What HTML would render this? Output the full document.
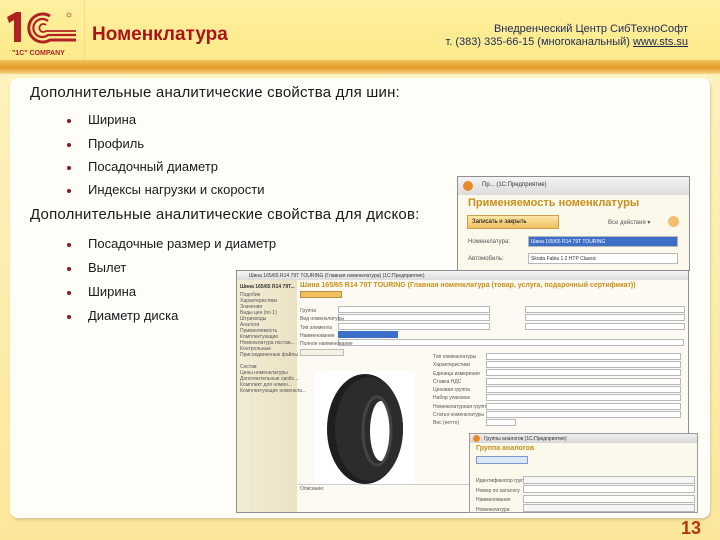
<!DOCTYPE html>
<html><head><meta charset="utf-8"><style>
*{margin:0;padding:0;box-sizing:border-box}
body{width:720px;height:540px;overflow:hidden;position:relative;background:linear-gradient(#fdf3c4,#fbe79a);font-family:"Liberation Sans","DejaVu Sans",sans-serif}
.hdr{position:absolute;left:0;top:0;width:720px;height:62px;background:linear-gradient(#fef0a0,#fde98a)}
.bar{position:absolute;left:0;top:60px;width:720px;height:14px;background:linear-gradient(#f4c45a,#e49a2a 55%,#f6d68a)}
.sep{position:absolute;left:84px;top:0;width:1px;height:62px;background:#f6dc8a}
.panel{position:absolute;left:10px;top:78px;width:700px;height:440px;background:#fffdf8;border-radius:8px;box-shadow:1px 2px 2px #d8c890}
.t{position:absolute;white-space:nowrap}
.h{font-size:15px;color:#1a1a1a;letter-spacing:.2px}
.b{font-size:13px;color:#1a1a1a}
.dot{position:absolute;width:4px;height:4px;border-radius:2px;background:#8b1a1a}
.win{position:absolute;background:#f7f3e4;border:1px solid #8e8e8e;overflow:hidden}
.tb{position:absolute;left:0;top:0;right:0;background:linear-gradient(#f4f4f4,#dcdcdc);font-size:6px;color:#333}
.f{position:absolute;background:#fff;border:1px solid #b8b8b8}
.l{position:absolute;font-size:5px;color:#555;white-space:nowrap}
</style></head><body>
<div class="hdr"></div>
<div class="sep"></div>
<div class="bar"></div>
<!-- logo -->
<svg style="position:absolute;left:4px;top:10px" width="76" height="48" viewBox="0 0 76 48">
<path d="M3 7 L12 2 L17 2 L17 32 L10 32 L10 10 L5 13Z" fill="#b02222"/>
<g fill="none" stroke="#b02222">
<path d="M46 6 A14 14 0 1 0 46 30 L72 30" stroke-width="3"/>
<path d="M44 11 A9 9 0 1 0 44 25 L72 25" stroke-width="2.2"/>
<path d="M42 15 A4 4 0 1 0 42 21 L72 21" stroke-width="1.8"/>
</g>
<circle cx="65" cy="5" r="2" fill="none" stroke="#b02222" stroke-width=".6"/>
<text x="8" y="45" font-size="7" font-family="Liberation Sans" font-weight="bold" fill="#b02222">"1C" COMPANY</text>
</svg>
<div class="t" style="left:92px;top:24px;font-size:19px;font-weight:bold;color:#a8141a">Номенклатура</div>
<div class="t" style="right:32px;top:23px;font-size:11px;color:#1c2a55;text-align:right;line-height:13px">Внедренческий Центр СибТехноСофт<br>т. (383) 335-66-15 (многоканальный) <u>www.sts.su</u></div>
<div class="panel"></div>
<div class="t h" style="left:30px;top:84px">Дополнительные аналитические свойства для шин:</div>
<div class="dot" style="left:67px;top:119px"></div><div class="t b" style="left:88px;top:112px">Ширина</div>
<div class="dot" style="left:67px;top:143px"></div><div class="t b" style="left:88px;top:136px">Профиль</div>
<div class="dot" style="left:67px;top:166px"></div><div class="t b" style="left:88px;top:159px">Посадочный диаметр</div>
<div class="dot" style="left:67px;top:189px"></div><div class="t b" style="left:88px;top:182px">Индексы нагрузки и скорости</div>
<div class="t h" style="left:30px;top:206px">Дополнительные аналитические свойства для дисков:</div>
<div class="dot" style="left:67px;top:243px"></div><div class="t b" style="left:88px;top:236px">Посадочные размер и диаметр</div>
<div class="dot" style="left:67px;top:267px"></div><div class="t b" style="left:88px;top:260px">Вылет</div>
<div class="dot" style="left:67px;top:291px"></div><div class="t b" style="left:88px;top:284px">Ширина</div>
<div class="dot" style="left:67px;top:315px"></div><div class="t b" style="left:88px;top:308px">Диаметр диска</div>

<!-- top window -->
<div class="win" style="left:457px;top:176px;width:233px;height:95px;background:#fbf8ec">
<div class="tb" style="height:18px;padding:5px 0 0 24px">Пр... (1С:Предприятие)</div>
<div style="position:absolute;left:5px;top:4px;width:10px;height:10px;border-radius:5px;background:#e88a2a"></div>
<div class="t" style="left:10px;top:20px;font-size:11px;font-weight:bold;color:#c8901a">Применяемость номенклатуры</div>
<div style="position:absolute;left:9px;top:38px;width:92px;height:14px;background:linear-gradient(#fbe6a8,#f0c060);border:1px solid #c8a050;font-size:6px;padding:3px 4px">Записать и закрыть</div>
<div class="l" style="left:150px;top:42px;font-size:6px">Все действия ▾</div>
<div style="position:absolute;left:210px;top:39px;width:11px;height:11px;border-radius:6px;background:#f0c070"></div>
<div class="l" style="left:10px;top:62px;font-size:6px">Номенклатура:</div>
<div class="f" style="left:70px;top:59px;width:150px;height:11px;background:#3d6fc8"></div>
<div class="l" style="left:73px;top:62px;color:#fff">Шина 165/65 R14 79T TOURING</div>
<div class="l" style="left:10px;top:79px;font-size:6px">Автомобиль:</div>
<div class="f" style="left:70px;top:76px;width:150px;height:11px"></div>
<div class="l" style="left:73px;top:79px;color:#333">Skoda Fabia 1.2 HTP Classic</div>
</div>

<!-- big window -->
<div class="win" style="left:236px;top:270px;width:453px;height:243px;background:#fcfaf2">
<div class="tb" style="height:9px;font-size:5px;padding:2px 0 0 12px">Шина 165/65 R14 79T TOURING (Главная номенклатура) (1С:Предприятие)</div>
<div style="position:absolute;left:0;top:9px;width:60px;height:234px;background:linear-gradient(90deg,#f3edd6,#ebe2c4)"></div>
<div class="l" style="left:3px;top:13px;font-weight:bold;color:#333">Шина 165/65 R14 79T...</div>
<div class="l" style="left:3px;top:21px;line-height:6px">Подобие<br>Характеристики<br>Значения<br>Виды цен (по 1)<br>Штрихкоды<br>Аналоги<br>Применяемость<br>Комплектующие<br>Номенклатура постав...<br>Контрольные<br>Присоединенные файлы<br><br>Состав<br>Цены номенклатуры<br>Дополнительные свойс...<br>Комплект для номен...<br>Комплектующие номенкла...</div>
<div class="t" style="left:63px;top:11px;font-size:7px;font-weight:bold;color:#c8901a">Шина 165/65 R14 79T TOURING (Главная номенклатура (товар, услуга, подарочный сертификат))</div>
<div style="position:absolute;left:63px;top:20px;width:42px;height:7px;background:#f0c060;border:1px solid #b89040"></div>
<div class="f" style="left:101px;top:35px;width:152px;height:7px"></div>
<div class="f" style="left:101px;top:43px;width:152px;height:7px"></div>
<div class="f" style="left:101px;top:52px;width:152px;height:7px"></div>
<div style="position:absolute;left:101px;top:60px;width:60px;height:7px;background:#3d6fc8"></div>
<div class="f" style="left:101px;top:68px;width:346px;height:7px"></div>
<div class="f" style="left:288px;top:35px;width:160px;height:7px"></div>
<div class="f" style="left:288px;top:43px;width:160px;height:7px"></div>
<div class="f" style="left:288px;top:52px;width:160px;height:7px"></div>
<div class="l" style="left:63px;top:36px;line-height:8.3px">Группа<br>Вид номенклатуры<br>Тип элемента<br>Наименование<br>Полное наименование</div>
<div style="position:absolute;left:63px;top:78px;width:44px;height:7px;background:#f5f0e0;border:1px solid #bbb"></div>
<div style="position:absolute;left:78px;top:100px;width:100px;height:115px;background:#fff"></div>
<svg style="position:absolute;left:80px;top:100px" width="100" height="115" viewBox="0 0 100 115">
<ellipse cx="48" cy="58" rx="38" ry="55" fill="#1e1e1e"/>
<ellipse cx="52" cy="58" rx="34" ry="52" fill="#2c2c2c"/>
<ellipse cx="64" cy="60" rx="11" ry="30" fill="#fff"/>
<ellipse cx="60" cy="60" rx="14" ry="34" fill="none" stroke="#444" stroke-width="3"/>
</svg>
<div class="l" style="left:196px;top:82px;line-height:8.3px">Тип номенклатуры<br>Характеристики<br>Единица измерения<br>Ставка НДС<br>Ценовая группа<br>Набор упаковок<br>Номенклатурная группа<br>Статья номенклатуры<br>Вес (нетто)</div>
<div class="f" style="left:249px;top:82px;width:195px;height:7px"></div>
<div class="f" style="left:249px;top:90px;width:195px;height:7px"></div>
<div class="f" style="left:249px;top:98px;width:195px;height:7px"></div>
<div class="f" style="left:249px;top:107px;width:195px;height:7px"></div>
<div class="f" style="left:249px;top:115px;width:195px;height:7px"></div>
<div class="f" style="left:249px;top:123px;width:195px;height:7px"></div>
<div class="f" style="left:249px;top:132px;width:195px;height:7px"></div>
<div class="f" style="left:249px;top:140px;width:195px;height:7px"></div>
<div class="f" style="left:249px;top:148px;width:30px;height:7px"></div>
<div style="position:absolute;left:61px;top:213px;width:392px;height:1px;background:#ccc"></div>
<div class="l" style="left:63px;top:215px">Описание:</div>
</div>

<!-- small dialog -->
<div class="win" style="left:469px;top:433px;width:229px;height:80px;background:#fbf8ec;border-color:#9a9a9a">
<div class="tb" style="height:9px;font-size:5px;padding:2px 0 0 14px;background:linear-gradient(#ededed,#d8d8d8)">Группы аналогов (1С:Предприятие)</div>
<div style="position:absolute;left:3px;top:1px;width:7px;height:7px;border-radius:4px;background:#e88a2a"></div>
<div class="t" style="left:6px;top:11px;font-size:7px;font-weight:bold;color:#c8901a">Группа аналогов</div>
<div style="position:absolute;left:6px;top:22px;width:52px;height:8px;background:#dbe6f6;border:1px solid #7a9ad0"></div>
<div class="l" style="left:6px;top:43px;line-height:9.5px">Идентификатор группы<br>Номер по каталогу<br>Наименование<br>Номенклатура</div>
<div class="f" style="left:53px;top:42px;width:172px;height:8px;background:#f6f6f6"></div>
<div class="f" style="left:53px;top:51px;width:172px;height:8px"></div>
<div class="f" style="left:53px;top:61px;width:172px;height:8px"></div>
<div class="f" style="left:53px;top:70px;width:172px;height:8px;background:#f6f6f6"></div>
</div>

<div class="t" style="left:681px;top:518px;font-size:18px;font-weight:bold;color:#b6360e">13</div>
</body></html>
